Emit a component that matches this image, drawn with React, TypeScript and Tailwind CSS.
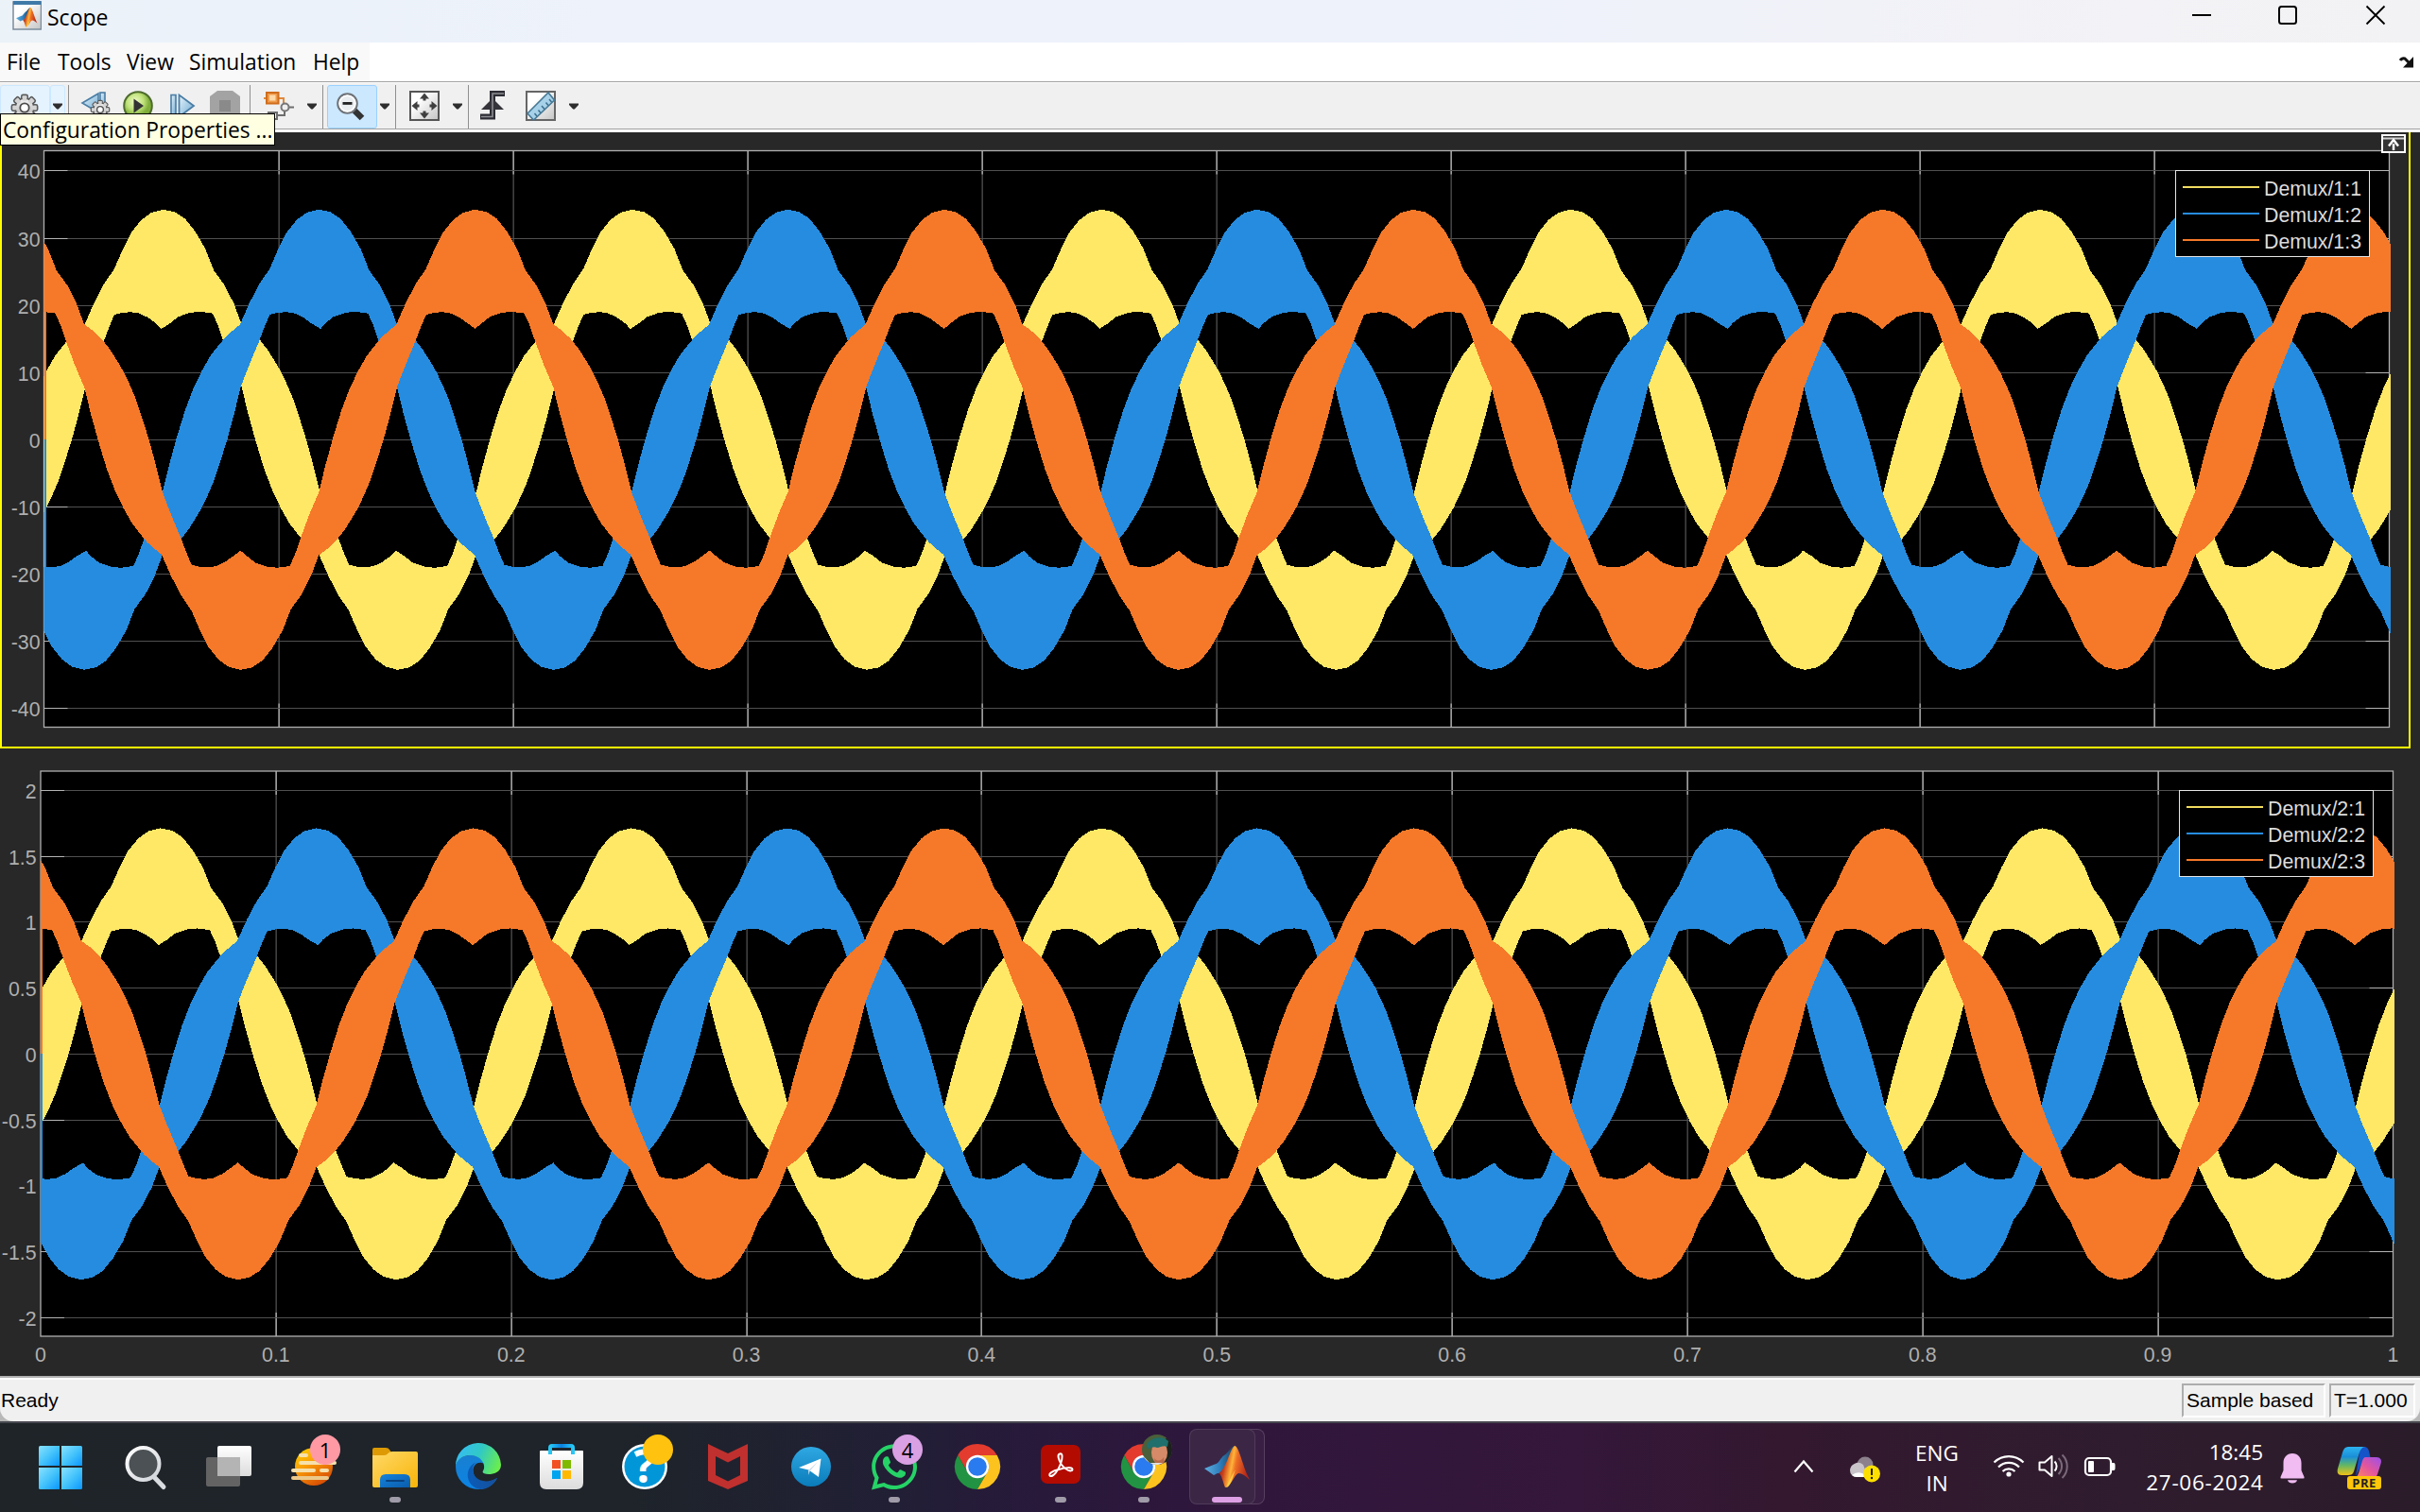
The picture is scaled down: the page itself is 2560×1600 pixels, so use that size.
import React from "react";
import { FaWhatsapp } from "react-icons/fa";

type Pt = [number, number];

const YELLOW = "#ffe866";
const BLUE = "#268cdf";
const ORANGE = "#f67929";

/* Upper envelope of one phase, sampled over one period. [offset, level] with
   offset measured from the positive crest (period = 1389 units). */
const PERIOD = 1389;
const UPPER: Pt[] = [
  [-1157, 17.2], [-1130, 16.2], [-1105, 15], [-1080, 13.4], [-1055, 11.4], [-1040, 10.1], [-1022, 8.2], [-1005, 6.2], [-985, 3.2], [-965, 0],
  [-945, -3.7], [-925, -7.8], [-910, -9.8], [-895, -11.7], [-870, -14.7], [-855, -16.7],
  [-839, -18.6], [-815, -18.9], [-790, -19], [-765, -18.8], [-740, -18.2], [-715, -17.3], [-694, -16.5],
  [-675, -17.3], [-650, -18.3], [-615, -18.9], [-585, -19.05], [-548, -18.8], [-532, -17], [-515, -14.5],
  [-490, -11.1], [-462, -7.8], [-443, -3.9], [-420, 0.3], [-395, 4.4], [-370, 7.7], [-345, 10.3], [-320, 12.5],
  [-295, 14.1], [-275, 15.3], [-255, 16.2], [-233, 17.1], [-205, 20.3], [-175, 23.2], [-145, 25.4], [-120, 28.3], [-95, 30.8],
  [-65, 32.7], [-35, 33.8], [0, 34.25], [35, 33.9], [65, 32.9], [95, 31], [125, 28.4], [150, 25.2], [182, 23],
  [210, 20.2],
];

function envelope(shift: number, cusp: number, toX: (u: number) => number, toY: (v: number) => number) {
  const up: Pt[] = [];
  const lo: Pt[] = [];
  for (let k = -2; k <= 7; k++) {
    for (const [o, v] of UPPER) {
      const nudge = o === -694 ? cusp : 0;
      up.push([o + nudge + shift + k * PERIOD, v]);
      lo.push([o + nudge + shift + (k + 0.5) * PERIOD, -v]);
    }
  }
  const line = (pts: Pt[]) => pts.map(([u, v]) => `${toX(u).toFixed(2)},${toY(v).toFixed(2)}`);
  return [...line(up), ...line(lo).reverse()].join(" ");
}

interface PlotProps {
  id: string;
  height: number;
  left: number;
  right: number;
  top: number;
  bottom: number;
  zeroY: number;
  unit: number;
  yTicks: { v: number; label: string }[];
  labelRight: number;
  xLabels?: boolean;
  width: number;
}

function Plot({ id, width, height, left, right, top, bottom, zeroY, unit, yTicks, labelRight, xLabels }: PlotProps) {
  const w = right - left;
  const toX = (u: number) => left + (u / PERIOD) * 0.2 * w;
  const toY = (v: number) => zeroY - v * unit;
  const xs = [1, 2, 3, 4, 5, 6, 7, 8, 9].map((i) => left + (w * i) / 10);
  const crest = 1276;
  return (
    <svg width={width} height={height} viewBox={`0 0 ${width} ${height}`} className="block" fontFamily='"Liberation Sans", Arial, sans-serif' fontSize="21.3">
      <clipPath id={id}>
        <rect x={left} y={top} width={w + 1.5} height={bottom - top} />
      </clipPath>
      <rect x={left} y={top} width={w} height={bottom - top} fill="#000" />
      {xs.map((x) => (
        <g key={x}>
          <rect x={Math.round(x) - 0.5} y={top} width="1.3" height={bottom - top} fill="#505050" />
          <rect x={Math.round(x) - 0.5} y={top} width="1.3" height="25" fill="#b4b4b4" />
          <rect x={Math.round(x) - 0.5} y={bottom - 25} width="1.3" height="25" fill="#b4b4b4" />
        </g>
      ))}
      {yTicks.map(({ v, label }) => {
        const y = Math.round(toY(v) - 0.5);
        return (
          <g key={label}>
            <rect x={left} y={y} width={w} height="1" fill="#505050" />
            <rect x={left} y={y} width="25" height="1" fill="#b4b4b4" />
            <rect x={right - 25} y={y} width="25" height="1" fill="#b4b4b4" />
            <text x={labelRight} y={y + 9} textAnchor="end" fill="#afafaf">{label}</text>
          </g>
        );
      })}
      <rect x={left} y={top} width={w} height={bottom - top} fill="none" stroke="#afafaf" strokeWidth="1.3" />
      <g clipPath={`url(#${id})`} shapeRendering="crispEdges">
        <polygon fill={YELLOW} points={envelope(crest - 923, -6, toX, toY)} />
        <polygon fill={BLUE} points={envelope(crest - 463, 6, toX, toY)} />
        <polygon fill={ORANGE} points={envelope(crest, 0, toX, toY)} />
        <rect x={left} y={zeroY} width="2" height={28 * unit} fill={BLUE} />
        <rect x={left} y={zeroY - 28 * unit} width="2" height={28 * unit} fill={ORANGE} />
      </g>
      {xLabels &&
        [0, 1, 2, 3, 4, 5, 6, 7, 8, 9, 10].map((i) => (
          <text key={i} x={left + (w * i) / 10} y={bottom + 26.5} textAnchor="middle" fill="#afafaf">
            {i === 0 ? "0" : i === 10 ? "1" : `0.${i}`}
          </text>
        ))}
    </svg>
  );
}

function Legend({ names, place }: { names: string[]; place: string }) {
  const colors = ["bg-[#f2dc60]", "bg-[#268cdf]", "bg-[#f67929]"];
  return (
    <div className={`absolute flex h-[92px] w-[206px] flex-col justify-center border border-[#e6e6e6] bg-black ${place}`}>
      {names.map((n, i) => (
        <div key={n} className="flex h-[28px] items-center pl-[7px] [font-family:'Liberation_Sans',Arial,sans-serif] text-[21.3px] leading-[28px] text-[#dcdcdc]">
          <span className={`mr-[5px] h-[2px] w-[81px] shrink-0 ${colors[i]}`} />
          <span className="whitespace-nowrap pt-[4px]">{n}</span>
        </div>
      ))}
    </div>
  );
}

/* ---------- toolbar icons ---------- */
const Defs = () => (
  <svg width="0" height="0" className="absolute">
    <defs>
      <linearGradient id="steel" x1="0" y1="0" x2="0" y2="1"><stop offset="0" stopColor="#f4f4f4" /><stop offset="1" stopColor="#b4b4b4" /></linearGradient>
      <linearGradient id="sky" x1="0" y1="0" x2="1" y2="1"><stop offset="0" stopColor="#e8f4fb" /><stop offset="1" stopColor="#6ba9d2" /></linearGradient>
      <radialGradient id="green" cx=".4" cy=".35"><stop offset="0" stopColor="#f0fbc8" /><stop offset=".6" stopColor="#bfe27a" /><stop offset="1" stopColor="#7fae3a" /></radialGradient>
      <linearGradient id="page" x1="0" y1="0" x2="1" y2="1"><stop offset=".3" stopColor="#ffffff" /><stop offset="1" stopColor="#c4c4c4" /></linearGradient>
      <linearGradient id="mlR" x1="0" y1="0" x2="1" y2="0.25"><stop offset="0" stopColor="#7a1710" /><stop offset=".28" stopColor="#c9401c" /><stop offset=".5" stopColor="#ffb43a" /><stop offset=".62" stopColor="#ee6f24" /><stop offset="1" stopColor="#b5271a" /></linearGradient>
      <linearGradient id="mlB" x1="0" y1="0" x2="1" y2="0"><stop offset="0" stopColor="#5fb0e0" /><stop offset=".5" stopColor="#2f7fbd" /><stop offset="1" stopColor="#17405f" /></linearGradient>
      <linearGradient id="win" x1="0" y1="0" x2="1" y2="1"><stop offset="0" stopColor="#8ae2ff" /><stop offset=".5" stopColor="#45c4fb" /><stop offset="1" stopColor="#0a96ff" /></linearGradient>
      <linearGradient id="egg" x1="0" y1="0" x2=".6" y2="1"><stop offset="0" stopColor="#ffd800" /><stop offset=".5" stopColor="#f99a08" /><stop offset="1" stopColor="#d84f04" /></linearGradient>
      <linearGradient id="fold" x1="0" y1="0" x2="1" y2="1"><stop offset="0" stopColor="#ffd968" /><stop offset="1" stopColor="#f8b408" /></linearGradient>
      <linearGradient id="foldB" x1="0" y1="0" x2="1" y2="1"><stop offset="0" stopColor="#1583dc" /><stop offset="1" stopColor="#0a5cab" /></linearGradient>
      <linearGradient id="edgeG" x1="0" y1=".3" x2="1" y2=".6"><stop offset="0" stopColor="#35bdf5" /><stop offset=".5" stopColor="#31c9c4" /><stop offset="1" stopColor="#6aee4c" /></linearGradient>
      <linearGradient id="edgeB" x1="0" y1="0" x2=".4" y2="1"><stop offset="0" stopColor="#1a7fcf" /><stop offset="1" stopColor="#0a84e6" /></linearGradient>
      <linearGradient id="edgeD" x1="0" y1="0" x2="1" y2="0"><stop offset="0" stopColor="#0a5cb8" /><stop offset="1" stopColor="#164f9b" /></linearGradient>
      <linearGradient id="bag" x1="0" y1="0" x2="0" y2="1"><stop offset="0" stopColor="#ffffff" /><stop offset="1" stopColor="#dcdcdc" /></linearGradient>
      <linearGradient id="handle" x1="0" y1="0" x2="1" y2="0"><stop offset="0" stopColor="#27c8f6" /><stop offset=".5" stopColor="#0a7fe0" /><stop offset="1" stopColor="#27c8f6" /></linearGradient>
      <linearGradient id="tg" x1="0" y1="0" x2="0" y2="1"><stop offset="0" stopColor="#2fa8e2" /><stop offset="1" stopColor="#0a7cba" /></linearGradient>
      <linearGradient id="lens" x1="0" y1="0" x2="1" y2="1"><stop offset="0" stopColor="#ffffff" /><stop offset="1" stopColor="#cfd3d8" /></linearGradient>
      <linearGradient id="cpL" x1="0" y1="0" x2="0" y2="1"><stop offset="0" stopColor="#2db4f0" /><stop offset=".35" stopColor="#1a8fd8" /><stop offset=".65" stopColor="#62b765" /><stop offset="1" stopColor="#f2c216" /></linearGradient>
      <linearGradient id="cpR" x1="1" y1="0" x2="0" y2="1"><stop offset="0" stopColor="#9a4fee" /><stop offset=".5" stopColor="#e3569c" /><stop offset="1" stopColor="#ff8a5c" /></linearGradient>
    </defs>
  </svg>
);

const Ico = ({ className = "", children }: { className?: string; children: React.ReactNode }) => (
  <svg viewBox="0 0 32 32" className={`h-[32px] w-[32px] shrink-0 ${className}`}>{children}</svg>
);

function Gear({ cx, cy, r }: { cx: number; cy: number; r: number }) {
  const teeth = [0, 45, 90, 135, 180, 225, 270, 315];
  return (
    <g transform={`translate(${cx} ${cy}) scale(${r / 14})`}>
      {teeth.map((a) => (
        <rect key={a} x="-3.2" y="-13.6" width="6.4" height="7" rx="1.6" transform={`rotate(${a})`} fill="#d0d0d0" stroke="#5a5a5a" strokeWidth="1.7" />
      ))}
      <circle r="10.4" fill="#5a5a5a" />
      <circle r="9.2" fill="url(#steel)" />
      {teeth.map((a) => (
        <rect key={a} x="-2.3" y="-12.4" width="4.6" height="5" transform={`rotate(${a})`} fill="#d4d4d4" />
      ))}
      <circle r="5.6" fill="#4c4c4c" />
      <circle r="3.8" fill="#fff" />
    </g>
  );
}

const Caret = ({ className = "" }: { className?: string }) => (
  <svg viewBox="0 0 16 46" className={`h-[46px] w-[16px] shrink-0 ${className}`}>
    <path d="M3 19.5H13V21L8.8 25.5H7.2L3 21Z" fill="#2d2d2d" />
  </svg>
);

const Sep = ({ className = "" }: { className?: string }) => <span className={`h-[46px] w-px shrink-0 bg-[#8f8f8f] ${className}`} />;

function Toolbar() {
  return (
    <div className="flex h-[52px] w-full items-start border-t-[1.5px] border-[#a0a0a0] bg-[#f0f0f0] pt-[3px] shadow-[inset_0_1px_0_#fff,inset_0_-1px_0_#fff,inset_0_-2px_0_#a0a0a0]">
      <span className="flex h-[46px] w-[53px] shrink-0 justify-center rounded-[3px] border border-[#cce8ff] bg-[#e5f3ff] pt-[5px]">
        <Ico className="-ml-px"><Gear cx={16} cy={18} r={14} /></Ico>
      </span>
      <span className="h-[46px] w-[16px] shrink-0 rounded-[3px] border border-[#cce8ff] bg-[#e5f3ff]"><Caret className="-ml-px -mt-px" /></span>
      <Sep className="ml-[3px]" />
      <Ico className="ml-[12px] mt-[6px]">
        <path d="M2 13L19 3V23Z" fill="url(#sky)" stroke="#4a7ea5" strokeWidth="1.6" />
        <rect x="21" y="2" width="5" height="20" fill="url(#sky)" stroke="#4a7ea5" strokeWidth="1.6" />
        <Gear cx={21} cy={20} r={10} />
      </Ico>
      <Ico className="ml-[13px] mt-[6px]">
        <circle cx="16" cy="16" r="14.8" fill="url(#green)" stroke="#4d6b2c" strokeWidth="2" />
        <path d="M11.5 8.5V23.5L22 16Z" fill="#333" />
      </Ico>
      <Ico className="ml-[15px] mt-[6px]">
        <rect x="4" y="4.5" width="5" height="23" fill="url(#sky)" stroke="#4a7ea5" strokeWidth="1.6" />
        <path d="M12.5 4.5V27.5L28 16Z" fill="url(#sky)" stroke="#4a7ea5" strokeWidth="1.8" />
      </Ico>
      <Ico className="ml-[13px] mt-[6px]">
        <path d="M8 0H24L32 6V26L24 32H8L0 26V6Z" fill="#a3a3a3" />
        <rect x="10" y="10" width="12" height="12" fill="#8a8a8a" />
      </Ico>
      <Sep className="ml-[10px]" />
      <Ico className="ml-[14px] mt-[6px]">
        <path d="M0 8H4M14 8H21V13" stroke="#e0893a" strokeWidth="2" fill="none" />
        <rect x="3" y="2" width="12.5" height="11.5" fill="#ef9a4a" stroke="#cf6d1c" strokeWidth="2" />
        <rect x="6" y="4.5" width="6.5" height="6" fill="#ffd9a8" />
        <path d="M27 17.5H32M22 20V26H13" stroke="#6e6e6e" strokeWidth="2" fill="none" />
        <circle cx="22.5" cy="17.5" r="4" fill="#eee" stroke="#777" strokeWidth="2" />
        <rect x="5" y="23" width="9" height="7" fill="#f4f4f4" stroke="#6e6e6e" strokeWidth="2" />
      </Ico>
      <Caret className="ml-[11px]" />
      <Sep className="ml-[3px]" />
      <span className="ml-[4px] flex h-[46px] w-[53px] shrink-0 justify-center rounded-[3px] border border-[#99d1ff] bg-[#cce8ff] pt-[5px]">
        <Ico className="-ml-[3px]">
          <path d="M19 20L28 29" stroke="#333" strokeWidth="6.5" />
          <circle cx="12.5" cy="13.5" r="10.3" fill="#e9edf0" stroke="#6f7377" strokeWidth="2" />
          <circle cx="12.5" cy="13.5" r="8.3" fill="none" stroke="#fff" strokeWidth="1.5" />
          <rect x="7.5" y="12" width="10" height="2.8" fill="#222" />
        </Ico>
      </span>
      <Caret />
      <Sep className="ml-[3px]" />
      <Ico className="ml-[14px] mt-[6px]">
        <rect x="1" y="1" width="30" height="30" fill="url(#page)" stroke="#555" strokeWidth="2" />
        <g fill="#3f3f3f">
          {[0, 90, 180, 270].map((a) => (
            <path key={a} d="M16 2.500L21 8.500H17.500V10.500H14.500V8.500H11Z" transform={`rotate(${a} 16 16)`} />
          ))}
        </g>
      </Ico>
      <Caret className="ml-[11px]" />
      <Sep className="ml-[3px]" />
      <Ico className="ml-[11px] mt-[6px]">
        <path d="M1 27.500H14V3H27" fill="none" stroke="#2c2c34" strokeWidth="6" />
        <path d="M2 20L14 8L26 20Z" fill="#34343a" />
        <path d="M2 27.500H14V3H26" fill="none" stroke="#8d8d93" strokeWidth="1.6" />
      </Ico>
      <Ico className="ml-[17px] mt-[6px]">
        <rect x="1" y="1" width="30" height="30" fill="url(#page)" stroke="#666" strokeWidth="2" />
        <path d="M2 24L24 2L30.500 10L8.500 31Z" fill="#a6d1e8" stroke="#467996" strokeWidth="1.6" />
        <path d="M12 27L9.500 24M16 23.500L13.500 20.500M20 19.500L17 16M24 15.500L21.500 12.500M27.500 12L25 9" stroke="#3c6f8e" strokeWidth="1.5" />
      </Ico>
      <Caret className="ml-[11px]" />
    </div>
  );
}

const Membrane = () => (
  <>
    <path d="M0 26L11 21.500C16 20.500 17 14.500 21 12C26 9 28 3 32 2L23 25L15.500 31C13 30.500 12 32 10 33Z" fill="url(#mlB)" />
    <path d="M32 2C35 1.500 38 12 41 21C43 28 46 34 48 38C44 34 40 31 36 31C31 33 28 46 22 46C20 41 18 32 15.500 31C24 25 27 5 32 2Z" fill="url(#mlR)" />
    <path d="M23 46C27 38 29 33 33 27C31 32 28 46 23 46Z" fill="#ffd94a" opacity=".8" />
  </>
);

/* ---------- taskbar ---------- */
const Big = ({ children }: { children: React.ReactNode }) => (
  <svg viewBox="0 0 48 48" className="h-[48px] w-[48px] overflow-visible">{children}</svg>
);

function App48({ children, badge, dot }: { children: React.ReactNode; badge?: React.ReactNode; dot?: boolean }) {
  return (
    <div className="relative flex h-[48px] w-[88px] shrink-0 items-center justify-center">
      {children}
      {badge}
      {dot && <span className="absolute left-[38px] top-[56px] h-[6px] w-[12px] rounded-full bg-[#a09ba8]" />}
    </div>
  );
}

const Badge = ({ tone, children }: { tone: string; children?: React.ReactNode }) => (
  <span className={`absolute left-[42px] top-[-10px] flex h-[32px] w-[32px] items-center justify-center rounded-full text-[22px] leading-none text-black ${tone}`}>{children}</span>
);

const Chrome = () => (
  <Big>
    <path d="M24 12H44.800A24 24 0 0 0 3.200 12L13.600 30A12 12 0 0 1 24 12Z" fill="#e33b2e" />
    <path d="M3.200 12A24 24 0 0 0 24 48L34.400 30A12 12 0 0 1 13.600 30Z" fill="#229342" />
    <path d="M44.800 12A24 24 0 0 1 24 48L34.400 30A12 12 0 0 0 24 12Z" fill="#fcc31e" />
    <circle cx="24" cy="24" r="12.2" fill="#fff" />
    <circle cx="24" cy="24" r="9.8" fill="#2a7af0" />
  </Big>
);

function Taskbar() {
  return (
    <div className="flex h-[96px] w-full border-t-2 border-[#47474f] bg-[linear-gradient(90deg,#1f2429_0%,#1e242a_26%,#211f35_37%,#28193b_43%,#31163c_52%,#34173a_65%,#33182f_74%,#2f1c2e_88%,#2b1c2a_100%)] pl-[22px] pt-[22px] text-white">
      <App48>
        <Big>
          <g fill="url(#win)" transform="translate(-1 0)">
            <path d="M0 3.500Q0 2 1.500 2H22V23H0Z" /><path d="M24 2H44.500Q46 2 46 3.500V23H24Z" />
            <path d="M0 25H22V48H1.500Q0 48 0 46.500Z" /><path d="M24 25H46V46.500Q46 48 44.500 48H24Z" />
          </g>
        </Big>
      </App48>
      <App48>
        <Big>
          <path d="M33 35L43 45.500" stroke="#d9dce0" strokeWidth="5" strokeLinecap="round" />
          <circle cx="21.500" cy="21" r="17" fill="#4b5155" stroke="url(#lens)" strokeWidth="4" />
        </Big>
      </App48>
      <App48>
        <Big>
          <rect x="12" y="2" width="36" height="32" rx="2" fill="url(#bag)" />
          <rect x="0" y="14" width="36" height="31" rx="2" fill="#6a6a6a" fillOpacity=".9" />
          <rect x="12" y="14" width="24" height="20" fill="#b4b4b4" />
        </Big>
      </App48>
      <App48 badge={<Badge tone="bg-[#ff99a4]">1</Badge>}>
        <Big>
          <circle cx="26" cy="24" r="20" fill="url(#egg)" />
          <g fill="#f6e0ac">
            <rect x="10" y="10" width="10" height="4" rx="2" /><rect x="24" y="10" width="14" height="4" rx="2" />
            <rect x="10" y="18" width="40" height="4" rx="2" /><rect x="2" y="26" width="26" height="4" rx="2" />
            <rect x="32" y="26" width="10" height="4" rx="2" /><rect x="2" y="34" width="40" height="4" rx="2" fill="#ecc98a" />
          </g>
        </Big>
      </App48>
      <App48 dot>
        <Big>
          <path d="M0 6Q0 4 2 4H14Q17 4 18 6L20 9H30V20H0Z" fill="#dd9a04" />
          <path d="M0 12H12Q15 12 17 9.500Q18 8 21 8H46Q48 8 48 10V44Q48 46 46 46H2Q0 46 0 44Z" fill="url(#fold)" />
          <path d="M8 46V38Q8 32 14 32H34Q40 32 40 38V46Z" fill="url(#foldB)" />
          <rect x="14" y="38" width="20" height="2" rx="1" fill="#08427f" />
        </Big>
      </App48>
      <App48>
        <Big>
          <path d="M0 24C1 16 8 12 15 12C25 12 30.500 17 29.500 20.500C24 18 18.500 22 18.500 28C19 40 32 44 44 36C40 43.500 33 48 24 48A24 24 0 0 1 0 24Z" fill="url(#edgeB)" />
          <path d="M18.200 26C18 39 32 43 44 36C40 44 33 48 26 48C16 46 11.500 38 13 30C14 25 17 21 22 19.500C19.500 21 18.200 23 18.200 26Z" fill="url(#edgeD)" />
          <path d="M0 24A24 24 0 0 1 48 22C48 30 40 32 35 32C30 32 27.500 30.500 29 28.500C32.500 23 28 12 15 12C7 12 1 17 0 24Z" fill="url(#edgeG)" />
        </Big>
      </App48>
      <App48>
        <Big>
          <path d="M1 8Q1 7 2 7H46Q47 7 47 8V41Q47 48 40 48H8Q1 48 1 41Z" fill="url(#bag)" />
          <path d="M12 11V4Q12 2 14 2H34Q36 2 36 4V11" fill="none" stroke="url(#handle)" strokeWidth="4" />
          <rect x="14" y="17" width="9" height="9" fill="#f25022" /><rect x="25" y="17" width="9" height="9" fill="#7fba00" />
          <rect x="14" y="28" width="9" height="9" fill="#00a4ef" /><rect x="25" y="28" width="9" height="9" fill="#ffb900" />
        </Big>
      </App48>
      <App48 badge={<Badge tone="bg-[#ffc20e]" />}>
        <Big>
          <circle cx="24" cy="24" r="24" fill="#fff" />
          <circle cx="24" cy="24" r="21.5" fill="#0096d8" />
          <text x="24" y="41" textAnchor="middle" fontSize="48" fontWeight="700" fill="#fff">?</text>
        </Big>
      </App48>
      <App48>
        <Big>
          <path fillRule="evenodd" d="M3 0L24 10L45 0V39L24 48L3 39ZM11 13V33L24 39.500L37 33V13L24 19.500Z" fill="#c0302e" />
        </Big>
      </App48>
      <App48>
        <Big>
          <circle cx="24" cy="24" r="21" fill="url(#tg)" />
          <path d="M11 25L34.500 15.500L32 35L21.500 27.500Z" fill="#fff" />
          <path d="M21 28L31 19L22.500 29L21.500 33Z" fill="#c8dcea" />
        </Big>
      </App48>
      <App48 dot badge={<Badge tone="bg-[#d9a0e3]">4</Badge>}>
        <FaWhatsapp className="h-[55px] w-[48px] shrink-0 text-[#25d366]" />
      </App48>
      <App48><Chrome /></App48>
      <App48 dot>
        <Big>
          <rect x="3" y="1" width="42" height="41" rx="7" fill="#b30b00" />
          <path d="M23 10.500C26.500 9 26 15.500 24 21C21 29 16 35 13 34C10 32 16 28 22 27C29 25 36.500 24 36.500 27C36 30 29 28 25 22C22 17 20 11.500 23 10.500Z" fill="none" stroke="#fff" strokeWidth="2" />
        </Big>
      </App48>
      <App48
        dot
        badge={
          <svg viewBox="0 0 32 32" className="absolute left-[42px] top-[-10px] h-[32px] w-[32px] rounded-full">
            <rect width="32" height="32" fill="#4a5f3a" />
            <path d="M32 0V32H23V6Z" fill="#1c211c" />
            <ellipse cx="18.500" cy="19" rx="8.500" ry="12" fill="#d68a68" />
            <path d="M5 12C7 3 22 0 28 7L27 13C23 11 19 14 16 14C12 12 9 15 6 15Z" fill="#1f6f6c" />
            <path d="M13 25C16 29 21 28 23 24L24 32H14Z" fill="#b86b4c" />
            <path d="M0 21L8 30H22L18 32H0Z" fill="#e3e3e0" />
          </svg>
        }
      >
        <Chrome />
      </App48>
      <div className="relative h-[48px] w-[88px] shrink-0">
        <span className="absolute left-[20px] top-[-16px] h-[80px] w-[64px] rounded-[8px] border border-white/15 bg-white/[0.04]" />
        <span className="absolute left-[4px] top-[-16px] flex h-[80px] w-[70px] items-center justify-center rounded-[8px] border border-white/10 bg-[#3c2646]">
          <span className="ml-[10px]"><Big><Membrane /></Big></span>
          <span className="absolute left-[23px] top-[71px] h-[6px] w-[32px] rounded-full bg-[#dda0e5]" />
        </span>
      </div>

      <div className="ml-auto flex h-[48px] items-start text-[22.500px] leading-[31.500px]">
        <svg viewBox="0 0 22 48" className="h-[48px] w-[22px]"><path d="M1.500 29.500L11 18.500L20.500 29.500" fill="none" stroke="#fff" strokeWidth="2.2" /></svg>
        <svg viewBox="0 0 34 48" className="ml-[37px] h-[48px] w-[34px]">
          <circle cx="17" cy="22" r="8.5" fill="#8b808b" />
          <path d="M1 28a8.500 8.500 0 0 1 14-6l5 13H8A7 7 0 0 1 1 28Z" fill="#c9c3ca" />
          <path d="M3 33Q9 28 16 32V35H8Q5 35 3 33Z" fill="#fff" />
          <circle cx="24" cy="31.500" r="9" fill="#fde000" />
          <path d="M24 26V33" stroke="#222" strokeWidth="2" /><circle cx="24" cy="36" r="1.2" fill="#222" />
        </svg>
        <div className="ml-[25px] mt-[-6px] w-[68px] text-center">ENG<br />IN</div>
        <svg viewBox="0 0 34 48" className="ml-[25px] h-[48px] w-[34px]" fill="none" stroke="#fff" strokeWidth="2.2">
          <path d="M1.500 19.500A22 22 0 0 1 32.500 19.500M6 24.500A15.500 15.500 0 0 1 28 24.500M10.500 29A9.500 9.500 0 0 1 23.500 29" />
          <circle cx="17" cy="32" r="2.6" fill="#fff" stroke="none" />
        </svg>
        <svg viewBox="0 0 34 48" className="ml-[14px] h-[48px] w-[34px]" fill="none" stroke="#fff" strokeWidth="2">
          <path d="M1.500 19.500H7L14.500 13V34L7 27.500H1.500Z" strokeLinejoin="round" />
          <path d="M17.500 18.500A7 7 0 0 1 17.500 28.500" />
          <g stroke="#7b6a7a"><path d="M21.500 15A12 12 0 0 1 21.500 32" /><path d="M25.500 11.500A17 17 0 0 1 25.500 36" /></g>
        </svg>
        <svg viewBox="0 0 34 48" className="ml-[14px] h-[48px] w-[34px]">
          <rect x="2" y="15" width="27" height="18" rx="4" fill="none" stroke="#fff" strokeWidth="2.2" />
          <rect x="5" y="18" width="6" height="12" rx="1" fill="#fff" />
          <path d="M30 20H32Q33.500 20 33.500 22V26Q33.500 28 32 28H30Z" fill="#fff" />
        </svg>
        <div className="ml-[16px] mt-[-7px] w-[140px] text-right">
          18:45<br /><span className="mr-[-0.700px] tracking-[0.700px]">27-06-2024</span>
        </div>
        <svg viewBox="0 0 28 48" className="ml-[17px] h-[48px] w-[28px]" fill="#f0bcf2">
          <path d="M14 10C8 10 4.500 14.500 4.500 20V28L1.500 35Q1 36.500 2.500 36.500H25.500Q27 36.500 26.500 35L23.500 28V20C23.500 14.500 20 10 14 10Z" />
          <path d="M9 38.200H19Q18 41.500 14 41.500Q10 41.500 9 38.200Z" />
        </svg>
        <svg viewBox="0 0 48 48" className="ml-[33px] mr-[40px] h-[48px] w-[48px]">
          <path d="M25 3H29C34 3 34 8 35.500 14L30 18C26 19 22 32 20 34Z" fill="#1553c9" />
          <path d="M12 3H30C27 3 25 6 24 9L18 29C17 32 15 33 12 33H5C1 33 0 30 1 26L6 9C7 5 9 3 12 3Z" fill="url(#cpL)" />
          <path d="M30 14H42C46 14 48 17 46.500 21L43 32C42 35 40 36 37 36H18C21 36 22 33 23 31L27 18C28 15 29 14 30 14Z" fill="url(#cpR)" />
          <rect x="11" y="34" width="36" height="14" rx="3" fill="#ffc60a" />
          <text x="29" y="45.500" textAnchor="middle" fontSize="13" fontWeight="700" fill="#222" letterSpacing=".5">PRE</text>
        </svg>
      </div>
    </div>
  );
}

const Cell = ({ className, children }: { className: string; children: React.ReactNode }) => (
  <span className={`flex h-[36px] items-center border-2 border-t-[#adadad] border-l-[#adadad] border-r-white border-b-white pl-[3px] ${className}`}>{children}</span>
);

export default function App() {
  return (
    <div className="flex h-[1600px] w-[2560px] flex-col overflow-hidden bg-[#b8b8b8] font-['Open_Sans','Noto_Sans',sans-serif]">
      <Defs />
      <div className="flex h-[45px] shrink-0 items-start bg-[linear-gradient(90deg,#ebf2f8_0%,#edf2fb_25%,#eef2fb_60%,#f3f2f6_88%,#f2f2f4_100%)] pl-[13px] text-black">
        <svg viewBox="0 0 31 31" className="mt-px h-[31px] w-[31px] shrink-0">
          <rect x="1" y="1" width="29.500" height="29" fill="url(#page)" stroke="#7b8c9c" strokeWidth="1.5" />
          <rect x="1" y="0" width="29.500" height="4" fill="#3f79a8" />
          <g transform="translate(4 6) scale(.47)"><Membrane /></g>
        </svg>
        <span className="ml-[6px] mt-[2px] text-[23px] leading-[32px]">Scope</span>
        <div className="ml-auto mr-[36px] flex gap-[70px] pt-[5px]">
          <svg viewBox="0 0 22 22" className="h-[22px] w-[22px]"><path d="M1 11H21" stroke="#000" strokeWidth="2" /></svg>
          <svg viewBox="0 0 22 22" className="h-[22px] w-[22px]"><rect x="1" y="2" width="18" height="18" rx="2.5" fill="none" stroke="#000" strokeWidth="2" /></svg>
          <svg viewBox="0 0 22 22" className="h-[22px] w-[22px]"><path d="M1.500 1.500L20.500 20.500M20.500 1.500L1.500 20.500" stroke="#000" strokeWidth="1.8" /></svg>
        </div>
      </div>

      <div className="flex h-[41px] shrink-0 items-center justify-between bg-white text-[22.800px] text-black">
        <div className="flex h-full w-[391px] items-center bg-[#f9f9f9] pl-[7px] pt-[2px]">
          <span className="w-[54px]">File</span>
          <span className="w-[73px]">Tools</span>
          <span className="w-[66px]">View</span>
          <span className="w-[131px]">Simulation</span>
          <span>Help</span>
        </div>
        <svg viewBox="0 0 16 12" className="mr-[6px] h-[12px] w-[16px]">
          <path d="M1 4Q3 1 6 2L11 7" fill="none" stroke="#111" strokeWidth="3" />
          <path d="M15 0V11.500H4Z" fill="#111" />
        </svg>
      </div>

      <div className="relative h-[54px] shrink-0 bg-white">
        <Toolbar />
        <div className="absolute left-0 top-[34px] z-10 flex h-[34px] w-[291px] items-center whitespace-nowrap border border-black bg-[#ffffe1] pl-[2px] pt-[3px] text-[22.800px] text-black">Configuration Properties ...</div>
      </div>

      <div className="relative h-[652px] shrink-0 bg-[#282828]">
        <div className="h-[652px] w-[2550px] border-b-2 border-l-2 border-r-2 border-[#ffff00]">
          <Plot
            id="plotA" width={2546} height={650} left={44.5} right={2525.5} top={19.5} bottom={629.5} zeroY={325.3} unit={7.11} labelRight={40.5}
            yTicks={[40, 30, 20, 10, 0, -10, -20, -30, -40].map((v) => ({ v, label: String(v) }))}
          />
        </div>
        <Legend names={["Demux/1:1", "Demux/1:2", "Demux/1:3"]} place="left-[2301px] top-[40px]" />
        <svg viewBox="0 0 26 20" className="absolute left-[2519px] top-[2px] h-[20px] w-[26px]">
          <rect x="1" y="1" width="24" height="18" fill="#333" stroke="#fff" strokeWidth="2" />
          <rect x="2" y="3.500" width="22" height="2" fill="#d0d0d0" />
          <path d="M13 17V10" stroke="#fff" strokeWidth="2.5" /><path d="M8 12.500L13 6L18 12.500" fill="none" stroke="#fff" strokeWidth="2.5" />
        </svg>
      </div>

      <div className="relative h-[664px] shrink-0 bg-[#282828]">
        <Plot
          id="plotB" width={2560} height={664} left={43} right={2531.500} top={24} bottom={622} zeroY={323.3} unit={6.975} labelRight={38.5} xLabels
          yTicks={[2, 1.5, 1, 0.5, 0, -0.5, -1, -1.5, -2].map((v) => ({ v: v * 20, label: String(v) }))}
        />
        <Legend names={["Demux/2:1", "Demux/2:2", "Demux/2:3"]} place="left-[2305px] top-[44px]" />
      </div>

      <div className="flex h-[48px] shrink-0 items-start rounded-b-[14px] border-t-2 border-[#b0b0b0] bg-[#f0f0f0] pt-[6px] [font-family:'Liberation_Sans',Arial,sans-serif] text-[21px] text-black shadow-[inset_0_2px_0_#fff]">
        <span className="flex h-[36px] items-center pl-px">Ready</span>
        <Cell className="ml-auto w-[152px]">Sample based</Cell>
        <Cell className="ml-[4px] mr-[5px] w-[91px]">T=1.000</Cell>
      </div>
      <Taskbar />
    </div>
  );
}
